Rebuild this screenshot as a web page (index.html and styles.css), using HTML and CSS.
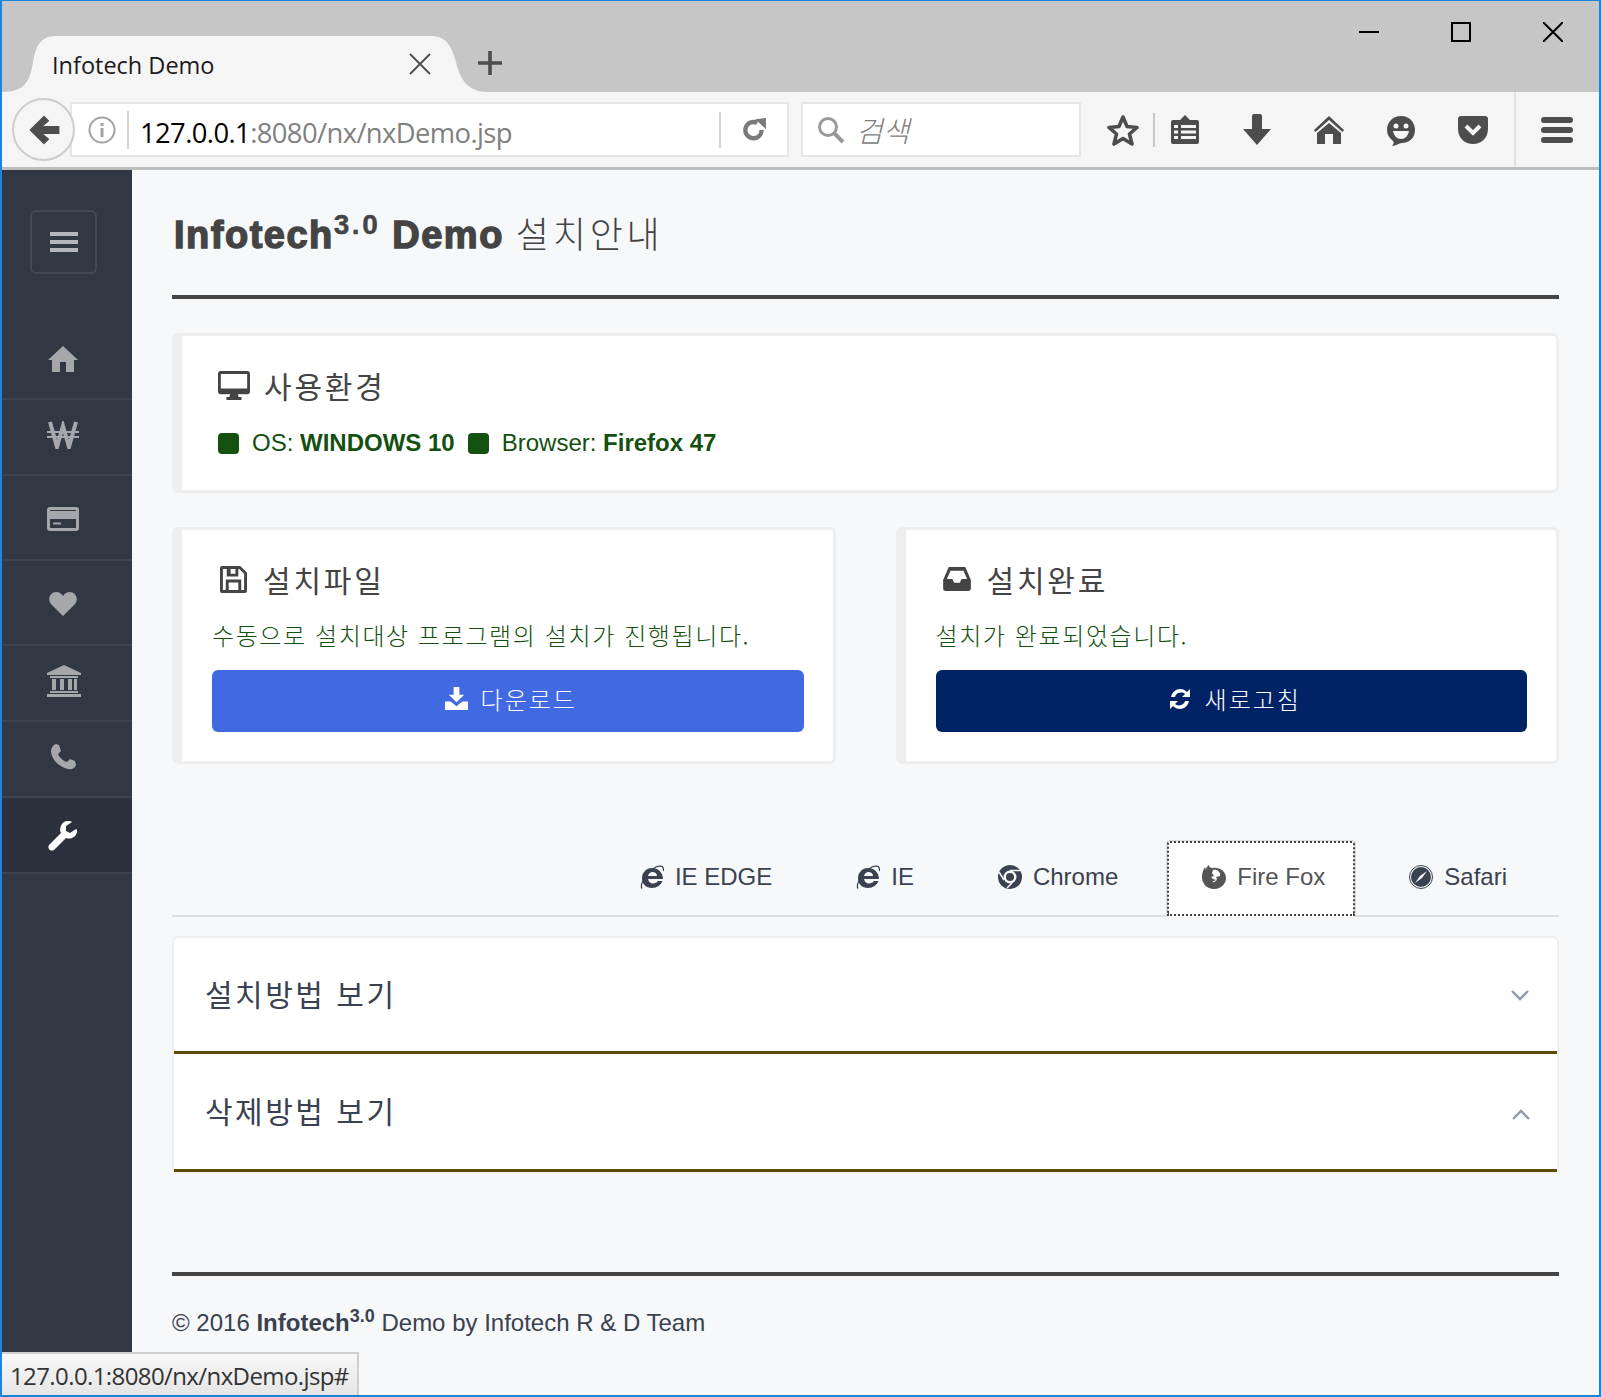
FILE: index.html
```html
<!DOCTYPE html>
<html lang="ko">
<head>
  <meta charset="UTF-8">
  <title>Infotech Demo</title>
  <link rel="stylesheet" href="styles.css">
</head>
<body>
<div class="window">
  <div class="tabstrip">
    <div class="tab">
      <svg class="tab-bg" viewBox="0 0 485 56"><path d="M0 56C24 56 28 44 31 26 34 8 40 0 54 0H429C443 0 449 8 454 26 458 44 467 56 485 56Z"/></svg>
      <span class="tab-title">Infotech Demo</span>
      <svg class="tab-close" viewBox="0 0 22 22"><path d="M1 1L21 21M21 1L1 21"/></svg>
    </div>
    <svg class="tab-new" viewBox="0 0 24 24"><path d="M12 0V24M0 12H24"/></svg>
    <div class="win-controls">
      <svg class="win-btn" viewBox="0 0 20 20"><path d="M0 10H20"/></svg>
      <svg class="win-btn" viewBox="0 0 20 20"><path d="M1 1H19V19H1Z"/></svg>
      <svg class="win-btn" viewBox="0 0 20 20"><path d="M0 0L20 20M20 0L0 20"/></svg>
    </div>
  </div>

  <div class="toolbar">
    <div class="back-btn">
      <svg viewBox="0 0 28 28" width="32" height="32"><path d="M14 2L2 14 14 26 18 22 12 17H27V11H12L18 6Z" fill="#4d4d4d" stroke="#4d4d4d" stroke-linejoin="round"/></svg>
    </div>
    <div class="urlbar">
      <svg class="url-info" viewBox="0 0 28 28"><circle cx="14" cy="14" r="12.5" fill="none" stroke="#a3a3a3" stroke-width="2"/><path d="M12.5 12H15.500V21H12.500ZM12.500 7H15.500V10H12.500Z" fill="#a3a3a3"/></svg>
      <span class="url-text"><b>127.0.0.1</b>:8080/nx/nxDemo.jsp</span>
      <span class="url-reload">
        <svg viewBox="0 0 24 24" width="26" height="26"><path d="M19 12A7.500 7.500 0 1 1 15 5.500" fill="none" stroke="#7a7a7a" stroke-width="4"/><path d="M13 2L23 1V11Z" fill="#7a7a7a"/></svg>
      </span>
    </div>
    <div class="searchbar">
      <svg viewBox="0 0 28 28" width="28" height="28"><circle cx="11" cy="11" r="8.500" fill="none" stroke="#999" stroke-width="3"/><path d="M17 17L26 26" stroke="#999" stroke-width="4"/></svg>
      <span class="search-text">검색</span>
    </div>
    <div class="tools">
      <svg class="tool tool-star" viewBox="0 0 32 32"><path d="M16 3L20 12.500 30 13.500 22.500 20 25 30 16 24.500 7 30 9.500 20 2 13.500 12 12.500Z" fill="none" stroke="#4d4d4d" stroke-width="3.600" stroke-linejoin="round"/></svg>
      <span class="tool-sep"></span>
      <svg class="tool tool-clip" viewBox="0 0 32 32"><path d="M4 6H11L16 1 21 6H28A2 2 0 0 1 30 8V28A2 2 0 0 1 28 30H4A2 2 0 0 1 2 28V8A2 2 0 0 1 4 6Z" fill="#4d4d4d"/><path d="M12 11H27V14H12ZM12 16.500H27V19.500H12ZM12 22H27V25H12ZM5 11H9V14H5ZM5 16.500H9V19.500H5ZM5 22H9V25H5Z" fill="#f5f5f5"/></svg>
      <svg class="tool tool-down" viewBox="0 0 32 32"><path d="M11 2A2 2 0 0 1 13 0H19A2 2 0 0 1 21 2V15H30L16 31 2 15H11Z" fill="#4d4d4d"/></svg>
      <svg class="tool tool-home" viewBox="0 0 32 32"><path d="M16 2L31 16 29.500 18 16 6 2.500 18 1 16Z M16 9L28 19V30H20V20H12V30H4V19Z" fill="#4d4d4d"/></svg>
      <svg class="tool tool-smile" viewBox="0 0 32 32"><path d="M16 2C24 2 30 8 30 16 30 24 24 29 17 29 14 29 11 32 7 32 9 30 9 28 8 27 4 24 2 20 2 16 2 8 8 2 16 2Z" fill="#4d4d4d"/><circle cx="11" cy="12" r="2.500" fill="#f5f5f5"/><circle cx="21" cy="12" r="2.500" fill="#f5f5f5"/><path d="M8 17H24C23 22 20 25 16 25 12 25 9 22 8 17Z" fill="#f5f5f5"/></svg>
      <svg class="tool tool-pocket" viewBox="0 0 32 32"><path d="M4 2H28A3 3 0 0 1 31 5V15C31 24 24 30 16 30 8 30 1 24 1 15V5A3 3 0 0 1 4 2Z" fill="#4d4d4d"/><path d="M9 12L16 19 23 12" fill="none" stroke="#f5f5f5" stroke-width="4"/></svg>
      <span class="tool-sep tool-sep-long"></span>
      <svg class="tool tool-menu" viewBox="0 0 32 26"><path d="M3 0H29A3 3 0 0 1 29 6H3A3 3 0 0 1 3 0ZM3 10H29A3 3 0 0 1 29 16H3A3 3 0 0 1 3 10ZM3 20H29A3 3 0 0 1 29 26H3A3 3 0 0 1 3 20Z" fill="#4d4d4d"/></svg>
    </div>
  </div>

  <div class="page">
    <aside class="sidebar">
      <button class="side-toggle">
        <svg viewBox="0 0 30 22" width="30" height="22"><path d="M1 1H29V5H1ZM1 9H29V13H1ZM1 17H29V21H1Z" fill="#b4b6ba"/></svg>
      </button>
      <ul class="side-menu">
        <li class="side-item">
          <svg viewBox="0 0 30 28" width="30" height="28"><path d="M15 1L30 15H26V27H18V17H12V27H4V15H0Z"/></svg>
        </li>
        <li class="side-item">
          <svg viewBox="0 0 32 28" width="32" height="28"><path d="M3 1L10 26 16 5 22 26 29 1" fill="none" stroke-width="4"/><path d="M0 11H32M0 16H32" fill="none" stroke-width="2"/></svg>
        </li>
        <li class="side-item side-item-tall">
          <svg viewBox="0 0 32 24" width="32" height="24"><path d="M3 0H29A3 3 0 0 1 32 3V21A3 3 0 0 1 29 24H3A3 3 0 0 1 0 21V3A3 3 0 0 1 3 0ZM3 3V4H29V3ZM3 12V21H29V12ZM6 15.500H14V17.500H6Z" fill-rule="evenodd"/></svg>
        </li>
        <li class="side-item side-item-tall">
          <svg viewBox="0 0 28 24" width="28" height="24"><path d="M14 24L2 12C-2 7 1 0 7.500 0 10 0 13 2 14 4 15 2 18 0 20.500 0 27 0 30 7 26 12Z"/></svg>
        </li>
        <li class="side-item">
          <svg class="side-bank" viewBox="0 0 34 32" width="34" height="32"><path d="M17 0L34 8V10H0V8ZM3 11H31V13H3ZM3 26H31V28H3ZM0 29H34V32H0ZM5 14H9V25H5ZM13 14H17V25H13ZM21 14H25V25H21ZM27 14H30V25H27Z"/></svg>
        </li>
        <li class="side-item">
          <svg viewBox="0 0 26 26" width="26" height="26"><path d="M6 0L9 1 11 7 8 10C9 13 13 17 17 18L20 15 25 17 26 21C25 24 22 26 18 25 9 23 2 16 1 8 1 4 3 1 6 0Z"/></svg>
        </li>
        <li class="side-item side-item-tall side-item-active">
          <svg viewBox="0 0 30 30" width="30" height="30"><path d="M20 0C22 0 23 0 24 1L18 5V10L22 12 28 8C30 9 29 13 27 15 24 18 20 18 18 17L7 28C5 30 2 30 1 28 0 26 0 25 2 23L13 12C11 8 13 3 16 1 17 0 19 0 20 0Z"/></svg>
        </li>
      </ul>
    </aside>

    <main class="content">
      <h1 class="page-title"><span class="brand">Infotech<sup>3.0</sup> Demo</span> <span class="page-title-ko">설치안내</span></h1>
      <hr class="rule">

      <section class="card card-env">
        <h2 class="card-head card-head-env">
          <svg class="card-icon" viewBox="0 0 34 30" width="32" height="29" preserveAspectRatio="none"><path d="M3 0H31A3 3 0 0 1 34 3V21A3 3 0 0 1 31 24H21L22 27H25V30H9V27H12L13 24H3A3 3 0 0 1 0 21V3A3 3 0 0 1 3 0ZM3 3V18H31V3Z" fill-rule="evenodd"/></svg>
          사용환경
        </h2>
        <p class="env-row">
          <span class="env-dot"></span><span>OS: <b>WINDOWS 10</b></span>
          <span class="env-dot"></span><span>Browser: <b>Firefox 47</b></span>
        </p>
      </section>

      <div class="card-row">
        <section class="card">
          <h2 class="card-head card-head-in">
            <svg class="card-icon" viewBox="0 0 28 28" width="27" height="27"><path d="M2 0H21L28 7V26A2 2 0 0 1 26 28H2A2 2 0 0 1 0 26V2A2 2 0 0 1 2 0ZM3 3V25H6V14H22V25H25V8L20 3H19V11H7V3ZM9 17V25H19V17ZM11 3V8H16V3Z" fill-rule="evenodd"/></svg>
            설치파일
          </h2>
          <p class="card-text">수동으로 설치대상 프로그램의 설치가 진행됩니다.</p>
          <a class="btn btn-blue" href="#">
            <svg viewBox="0 0 24 24" width="23" height="23"><path d="M9 0H15V8H20L12 16 4 8H9ZM0 15H6L12 20 18 15H24V24H0Z" fill="#fff"/></svg>
            다운로드
          </a>
        </section>
        <section class="card">
          <h2 class="card-head card-head-in card-head-box">
            <svg class="card-icon" viewBox="0 0 30 26" width="28" height="24"><path d="M6 0H24L30 14V23A3 3 0 0 1 27 26H3A3 3 0 0 1 0 23V14ZM8 4L4 13H10L12 17H18L20 13H26L22 4Z" fill-rule="evenodd"/></svg>
            설치완료
          </h2>
          <p class="card-text">설치가 완료되었습니다.</p>
          <a class="btn btn-navy" href="#">
            <svg viewBox="0 0 24 24" width="24" height="24"><path d="M3 10C4 5 8 2 12 2 15 2 17 3 19 5L22 2V10H14L17 7C15 5 10 5 8 8 7 9 7 10 7 10ZM21 14C20 19 16 22 12 22 9 22 7 21 5 19L2 22V14H10L7 17C9 19 14 19 16 16 17 15 17 14 17 14Z" fill="#fff"/></svg>
            새로고침
          </a>
        </section>
      </div>

      <nav class="tabs">
        <a class="tab-link" href="#">
          <svg class="tab-icon" viewBox="0 0 24 24"><path d="M12 3C18 3 23 7.500 23 14H8C8.500 17 11 18.500 13 18.500 15 18.500 17 17.500 18 16H22.500C21 20 17 23 12 23 6 23 2 19 2 13 2 8 6 3 12 3ZM8 11H17C17 8.500 15 7 12.500 7 10.500 7 8.500 8.500 8 11Z" fill-rule="evenodd"/><path d="M2 23.500C-1 20 8 6 16 2 21 0 24 1 23.500 6" fill="none" stroke-width="1.200"/></svg>
          IE EDGE
        </a>
        <a class="tab-link" href="#">
          <svg class="tab-icon" viewBox="0 0 24 24"><path d="M12 3C18 3 23 7.500 23 14H8C8.500 17 11 18.500 13 18.500 15 18.500 17 17.500 18 16H22.500C21 20 17 23 12 23 6 23 2 19 2 13 2 8 6 3 12 3ZM8 11H17C17 8.500 15 7 12.500 7 10.500 7 8.500 8.500 8 11Z" fill-rule="evenodd"/><path d="M2 23.500C-1 20 8 6 16 2 21 0 24 1 23.500 6" fill="none" stroke-width="1.200"/></svg>
          IE
        </a>
        <a class="tab-link" href="#">
          <svg class="tab-icon" viewBox="0 0 24 24"><circle cx="12" cy="12" r="12"/><circle cx="12" cy="12" r="6.500" fill="#f7f8fa"/><circle cx="12" cy="12" r="4"/><path d="M12 5.500H23M6 15L1 7M14 18L9 23" fill="none" stroke="#f7f8fa" stroke-width="1.500"/></svg>
          Chrome
        </a>
        <a class="tab-link tab-link-on" href="#">
          <svg class="tab-icon" viewBox="0 0 24 24"><path d="M7 0C7 2 8 3 11 3 17 2 24 6 24 13 24 19 19 24 12 24 5 24 0 19 0 12 0 8 1 5 3 2L4 5C4 3 5 1 7 0Z"/><path d="M11 5C15 4 19 7 18 11L14 12C16 14 14 18 10 17L14 15 11 14 9 12 12 11 10 8Z" fill="#fff"/></svg>
          Fire Fox
        </a>
        <a class="tab-link" href="#">
          <svg class="tab-icon" viewBox="0 0 24 24"><circle cx="12" cy="12" r="11.500" fill="none" stroke-width="1"/><circle cx="12" cy="12" r="10"/><path d="M18 6L13 13 6 18 11 11Z" fill="#f7f8fa"/></svg>
          Safari
        </a>
      </nav>

      <div class="accordion">
        <div class="acc-item">
          <span class="acc-title">설치방법 보기</span>
          <svg viewBox="0 0 18 11" width="18" height="11"><path d="M1 1L9 9 17 1" fill="none" stroke="#8f99a8" stroke-width="2.400"/></svg>
        </div>
        <div class="acc-item acc-item-open">
          <span class="acc-title">삭제방법 보기</span>
          <svg viewBox="0 0 18 11" width="18" height="11"><path d="M1 10L9 2 17 10" fill="none" stroke="#8f99a8" stroke-width="2.400"/></svg>
        </div>
      </div>

      <hr class="rule rule-foot">
      <footer class="foot">© 2016 <b>Infotech<sup>3.0</sup></b> Demo by Infotech R &amp; D Team</footer>
    </main>
  </div>

  <div class="status">127.0.0.1:8080/nx/nxDemo.jsp#</div>
</div>
</body>
</html>
```
FILE: styles.css
```css
* {
  box-sizing: border-box;
}
html, body {
  margin: 0;
  height: 100%;
}
body {
  font-family: "Liberation Sans", "Noto Sans CJK KR", sans-serif;
  font-size: 24px;
  color: #3a4150;
}
a {
  text-decoration: none;
  color: inherit;
}

/* browser frame */
.window {
  position: relative;
  display: flex;
  flex-direction: column;
  width: 1601px;
  height: 1397px;
  border: 2px solid #1b84dc;
  border-top-width: 1px;
  overflow: hidden;
  background-color: #f7f8fa;
}
.tabstrip {
  display: flex;
  align-items: flex-end;
  flex: none;
  height: 91px;
  background-color: #c6c6c6;
}
.tab {
  position: relative;
  display: flex;
  align-items: center;
  flex: none;
  width: 485px;
  height: 56px;
  padding: 0 56px 0 50px;
}
.tab-bg {
  position: absolute;
  left: 0;
  top: 0;
  width: 485px;
  height: 56px;
  fill: #f5f5f5;
}
.tab-title {
  position: relative;
  flex: 1;
  margin-top: 2px;
  font-family: "Open Sans", "Noto Sans", sans-serif;
  font-size: 23.500px;
  color: #1a1a1a;
}
.tab-close {
  position: relative;
  width: 22px;
  height: 22px;
  stroke: #4d4d4d;
  stroke-width: 1.8;
  fill: none;
}
.tab-new {
  width: 24px;
  height: 24px;
  margin: 0 0 17px -9px;
  stroke: #4d4d4d;
  stroke-width: 3.600;
  fill: none;
}
.win-controls {
  display: flex;
  align-self: flex-start;
  gap: 72px;
  margin: 21px 0 0 auto;
  padding-right: 36px;
}
.win-btn {
  width: 20px;
  height: 20px;
  stroke: #000;
  stroke-width: 2;
  fill: none;
}

.toolbar {
  display: flex;
  align-items: center;
  flex: none;
  height: 78px;
  padding: 0 0 0 10px;
  border-bottom: 3px solid #bdbdbd;
  background-color: #f5f5f5;
}
.back-btn {
  position: relative;
  display: flex;
  align-items: center;
  justify-content: center;
  flex: none;
  width: 63px;
  height: 63px;
  border: 2px solid #cdcdcd;
  border-radius: 50%;
  background-color: #f5f5f5;
}
.urlbar {
  display: flex;
  align-items: center;
  flex: none;
  width: 719px;
  height: 55px;
  margin-left: -5px;
  padding-left: 16px;
  border: 2px solid #e6e6e6;
  background-color: #fff;
}
.url-info {
  width: 28px;
  height: 28px;
}
.url-text {
  flex: 1;
  height: 38px;
  margin-left: 11px;
  padding: 3px 0 0 11px;
  border-left: 2px solid #d4d4d4;
  font-family: "Open Sans", "Noto Sans", sans-serif;
  font-size: 27.400px;
  line-height: 38px;
  letter-spacing: -.6px;
  color: #808080;
}
.url-text b {
  font-weight: 400;
  color: #000;
}
.url-reload {
  display: flex;
  align-items: center;
  justify-content: center;
  width: 68px;
  height: 36px;
  border-left: 2px solid #d4d4d4;
}
.searchbar {
  display: flex;
  align-items: center;
  flex: none;
  width: 280px;
  height: 55px;
  margin-left: 12px;
  padding-left: 14px;
  border: 2px solid #e6e6e6;
  background-color: #fff;
}
.search-text {
  margin: 0 0 2px 11px;
  font-family: "Noto Sans CJK KR", sans-serif;
  font-size: 29px;
  font-style: italic;
  font-weight: 300;
  color: #808080;
}
.tools {
  display: flex;
  align-items: center;
  flex: 1;
  height: 100%;
  padding-left: 26px;
}
.tool {
  flex: none;
  width: 32px;
  height: 32px;
  margin-right: 40px;
}
.tool-star {
  margin-right: 14px;
}
.tool-sep {
  width: 2px;
  height: 34px;
  margin-right: 14px;
  background-color: #c8c8c8;
}
.tool-pocket {
  margin-right: 25px;
}
.tool-sep-long {
  height: 100%;
  margin-right: 25px;
  background-color: #e2e2e2;
}
.tool-menu {
  height: 26px;
  margin-right: 0;
}

.page {
  display: flex;
  flex: 1;
  min-height: 0;
}

/* left nav */
.sidebar {
  flex: none;
  width: 130px;
  padding-top: 40px;
  background-color: #313743;
}
.side-toggle {
  display: flex;
  align-items: center;
  justify-content: center;
  width: 67px;
  height: 64px;
  margin: 0 0 50px 28px;
  padding: 0;
  border: 2px solid #434855;
  border-radius: 6px;
  background: none;
}
.side-menu {
  margin: 0;
  padding: 0;
  list-style: none;
}
.side-item {
  display: flex;
  align-items: center;
  justify-content: center;
  height: 76px;
  padding: 0 8px 4px 0;
  border-bottom: 2px solid #3e4350;
  fill: #a5a7ab;
  stroke: #a5a7ab;
  stroke-width: 0;
}
.side-item-tall {
  height: 85px;
  padding-top: 2px;
  padding-bottom: 0;
}
.side-item-active {
  height: 76px;
  background-color: #2d313d;
  fill: #fff;
}
.side-bank {
  margin-left: 2px;
}

/* main column */
.content {
  flex: 1;
  min-width: 0;
  padding: 34px 40px 0 40px;
}
.page-title {
  display: flex;
  align-items: baseline;
  gap: 12px;
  margin: 0;
  height: 56px;
  padding-left: 2px;
  line-height: 56px;
  font-weight: 400;
  color: #444;
}
.brand {
  font-size: 38px;
  font-weight: 700;
  letter-spacing: 1.500px;
  -webkit-text-stroke: 1.400px #444;
}
.brand sup {
  font-size: 28px;
  line-height: 0;
  letter-spacing: 2.500px;
  -webkit-text-stroke: .4px #444;
}
.page-title-ko {
  font-family: "Noto Sans CJK KR", sans-serif;
  font-size: 36px;
  font-weight: 300;
  letter-spacing: 3.800px;
}
.rule {
  height: 4px;
  margin: 35px 0 34px;
  border: none;
  background-color: #444;
}

.card {
  flex: 1;
  height: 237px;
  padding: 28px 29px 0 30px;
  border: 3px solid #eeeeee;
  border-left-width: 10px;
  border-radius: 6px;
  background-color: #fff;
}
.card-env {
  height: 160px;
  padding-left: 36px;
  margin-bottom: 34px;
}
.card-head {
  display: flex;
  align-items: center;
  gap: 16px;
  height: 44px;
  margin: 0;
  padding-bottom: 2px;
  font-family: "Noto Sans CJK KR", sans-serif;
  font-size: 30px;
  font-weight: 400;
  letter-spacing: 2.800px;
  color: #444;
}
.card-head-env {
  gap: 14px;
}
.card-head-in {
  padding-left: 8px;
}
.card-head-box {
  padding-left: 7px;
}
.card-icon {
  flex: none;
  fill: #444;
}
.env-row {
  display: flex;
  align-items: center;
  height: 30px;
  margin: 20px 0 0;
  color: #14500f;
}
.env-dot {
  width: 21px;
  height: 21px;
  margin-right: 13px;
  border-radius: 4px;
  background-color: #14500f;
}
.env-row span + .env-dot {
  margin-left: 13px;
}
.card-row {
  display: flex;
  gap: 60px;
}
.card-text {
  height: 34px;
  margin: 16px 0 18px;
  font-family: "Noto Sans CJK KR", sans-serif;
  font-size: 24px;
  font-weight: 300;
  line-height: 34px;
  letter-spacing: 1.600px;
  color: #14500f;
}
.btn {
  display: flex;
  align-items: center;
  justify-content: center;
  gap: 13px;
  height: 62px;
  padding: 0 0 5px 6px;
  border-radius: 6px;
  font-family: "Noto Sans CJK KR", sans-serif;
  font-size: 24px;
  font-weight: 300;
  letter-spacing: 2px;
  color: #fff;
}
.btn-blue {
  background-color: #4169e1;
}
.btn-navy {
  background-color: #002366;
}

/* browser tabs */
.tabs {
  display: flex;
  justify-content: flex-end;
  height: 77px;
  margin-top: 76px;
  padding-right: 22px;
  border-bottom: 2px solid #dddee0;
}
.tab-link {
  display: flex;
  align-items: center;
  gap: 11px;
  margin-left: 19px;
  padding: 0 30px 2px 35px;
  fill: #3a4150;
  stroke: #3a4150;
  stroke-width: 0;
}
.tab-icon {
  flex: none;
  width: 24px;
  height: 24px;
}
.tab-link-on {
  height: 77px;
  margin: 0 -1px 0 18px;
  padding: 0 29px 6px 34px;
  border: 2px solid #dddee0;
  border-bottom: none;
  border-radius: 4px 4px 0 0;
  outline: 2px dotted #444;
  outline-offset: -3px;
  background-color: #fff;
  color: #555;
  fill: #555;
}

.accordion {
  height: 237px;
  margin-top: 19px;
  border: 2px solid #eeeeee;
  border-radius: 6px;
  background-color: #fff;
}
.acc-item {
  display: flex;
  align-items: center;
  justify-content: space-between;
  height: 116px;
  padding: 0 28px 4px 31px;
  border-bottom: 3px solid #5f4b08;
}
.acc-item svg {
  margin-top: 6px;
}
.acc-item-open {
  height: 118px;
}
.acc-item-open svg {
  margin: 10px -1px 0 0;
}
.acc-title {
  font-family: "Noto Sans CJK KR", sans-serif;
  font-size: 30px;
  font-weight: 400;
  letter-spacing: 2.500px;
}
.rule-foot {
  margin: 99px 0 0;
}
.foot {
  height: 34px;
  margin-top: 30px;
  line-height: 34px;
}
.foot sup {
  font-size: 18px;
  line-height: 0;
}

/* hover link shown by the browser */
.status {
  position: absolute;
  left: 0;
  bottom: 0;
  width: 357px;
  height: 43px;
  padding-left: 8px;
  border-top: 2px solid #cfcfcf;
  border-right: 2px solid #cfcfcf;
  background: linear-gradient(#f7f7f7, #e6e6e6);
  font-family: "Open Sans", "Noto Sans", sans-serif;
  font-size: 24px;
  line-height: 44px;
  letter-spacing: -.6px;
  color: #333;
}
```
